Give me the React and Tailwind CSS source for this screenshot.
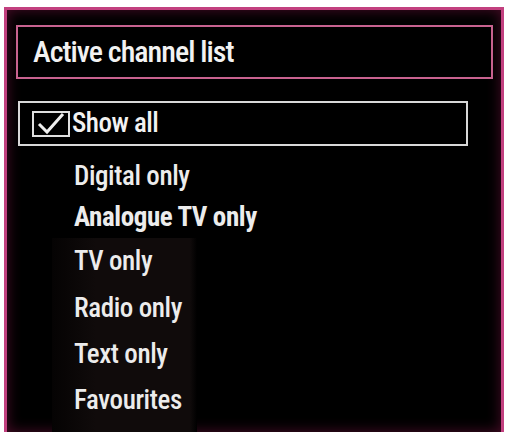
export default function App() {
  const top = [
    { label: "Digital only", h: "h-[40px]", w: "font-medium" },
    { label: "Analogue TV only", h: "h-[42px]", w: "font-bold" },
  ];
  const rest = [
    { label: "TV only", h: "h-[47px]" },
    { label: "Radio only", h: "h-[46px]" },
    { label: "Text only", h: "h-[46px]" },
    { label: "Favourites", h: "h-[46px]" },
  ];

  return (
    <div
      className="w-[506px] h-[432px] bg-white pt-[7px] pl-[4px] pr-[2px] overflow-hidden"
      style={{ fontFamily: '"Roboto Condensed", "DejaVu Sans Condensed", sans-serif' }}
    >
      {/* TV frame */}
      <div className="h-full border-[3px] border-b-0 border-[#c2407f] bg-black shadow-[inset_0_0_14px_#4a0c28] flex flex-col">
        {/* Title */}
        <div className="mt-[15px] ml-[9px] mr-[8px] h-[54px] border-2 border-[#c8628f] bg-black flex items-center pl-[15px]">
          <span className="text-[30px] font-medium text-[#f2f2f2] tracking-[-1px] leading-none">
            Active channel list
          </span>
        </div>

        {/* Selected row */}
        <div className="mt-[22px] ml-[11px] w-[450px] h-[45px] border-2 border-[#d8d8d8] flex items-center pl-[12px]">
          <div className="w-[38px] h-[26px] border-2 border-[#e0e0e0] flex items-center justify-center">
            <svg width="30" height="22" viewBox="0 0 30 22" fill="none">
              <path
                d="M3 11 L11 19 L27 1"
                stroke="#f0f0f0"
                strokeWidth="3"
                strokeLinejoin="miter"
              />
            </svg>
          </div>
          <span className="ml-[2px] text-[27px] font-medium text-[#f2f2f2] tracking-[-0.5px] leading-none">
            Show all
          </span>
        </div>

        {/* Options */}
        <div className="mt-[10px] pl-[67px] flex flex-col flex-1">
          {top.map((item) => (
            <div
              key={item.label}
              className={
                item.h +
                " " +
                item.w +
                " flex items-center text-[27px] text-[#ececec] tracking-[-0.4px] leading-none"
              }
            >
              {item.label}
            </div>
          ))}
          <div className="-ml-[22px] pl-[22px] w-[145px] flex-1 bg-[linear-gradient(90deg,#050303,#100b0b_30%,#100b0b_95%,#000)] flex flex-col">
            {rest.map((item) => (
              <div
                key={item.label}
                className={
                  item.h +
                  " flex items-center whitespace-nowrap text-[27px] font-medium text-[#ececec] tracking-[-0.4px] leading-none"
                }
              >
                {item.label}
              </div>
            ))}
          </div>
        </div>
      </div>
    </div>
  );
}
